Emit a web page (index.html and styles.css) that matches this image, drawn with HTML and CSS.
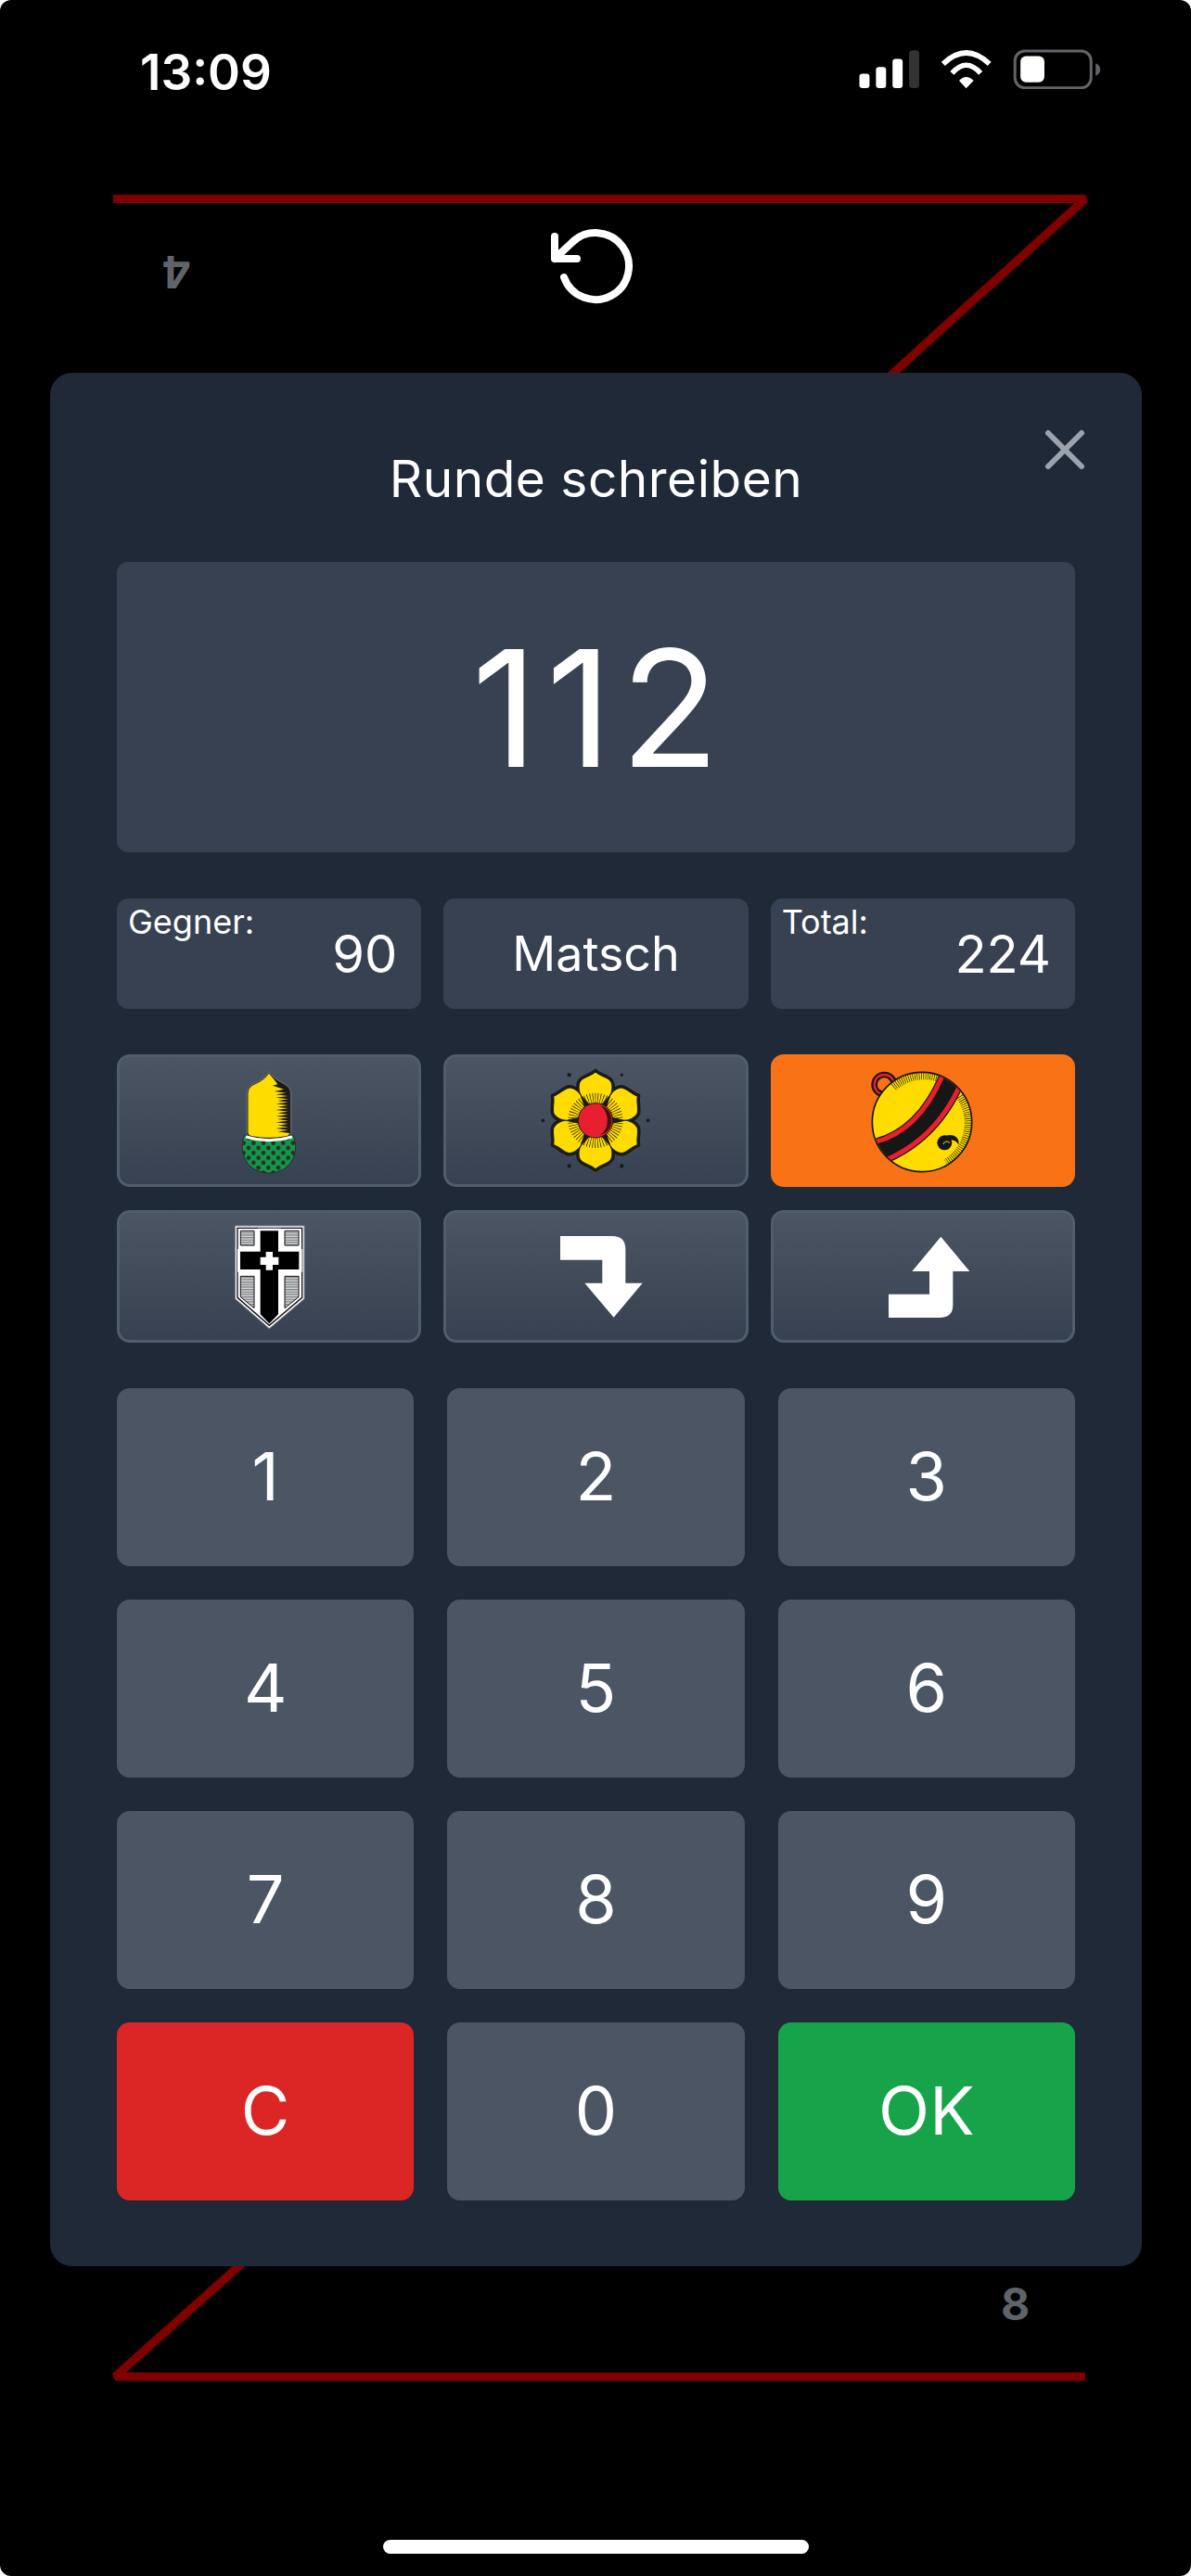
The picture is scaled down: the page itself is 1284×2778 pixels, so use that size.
FILE: index.html
```html
<!DOCTYPE html>
<html>
	<head>
		<meta charset="utf-8">
		<title>Runde schreiben</title>
		<link rel="stylesheet" href="styles.css">
	</head>
	<body>
		<div class="screen">
			<div class="status-bar">
				<span class="time">13:09</span>
				<svg class="status-icons" viewBox="130 40 790 130">
					<rect x="135" y="120" width="33" height="47" rx="10" fill="#fff"/>
					<rect x="189" y="98" width="33" height="69" rx="10" fill="#fff"/>
					<rect x="243" y="72" width="33" height="95" rx="10" fill="#fff"/>
					<rect x="297" y="44" width="33" height="123" rx="12" fill="#333"/>
					<path d="M408 88Q483 16 559 88" fill="none" stroke="#fff" stroke-width="17"/>
					<path d="M437 118Q483 66 530 118" fill="none" stroke="#fff" stroke-width="17"/>
					<path d="M460 143Q483 118 507 143L483 168Z" fill="#fff"/>
					<rect x="642" y="46" width="248" height="120" rx="32" fill="none" stroke="#636469" stroke-width="9"/>
					<rect x="660" y="63" width="78" height="85" rx="18" fill="#fff"/>
					<path d="M905 86Q920 92 920 106Q920 120 905 127Z" fill="#636469"/>
				</svg>
			</div>

			<!-- game table behind the dialog -->
			<svg class="table-lines" viewBox="0 0 1284 2778">
				<path d="M122 214.500H1170L960 405" fill="none" stroke="#800000" stroke-width="9" stroke-linejoin="bevel"/>
				<path d="M262 2440L124 2563H1170" fill="none" stroke="#800000" stroke-width="9" stroke-linejoin="bevel"/>
			</svg>
			<span class="table-num num-top">4</span>
			<span class="table-num num-bottom">8</span>
			<svg class="undo" viewBox="0 0 24 24">
				<path d="M1 4v6h6M3.510 15a9 9 0 1 0 2.130-9.360L1 10"/>
			</svg>

			<div class="modal">
				<svg class="close" viewBox="0 0 24 24"><path d="M6 18L18 6M6 6l12 12"/></svg>
				<div class="title">Runde schreiben</div>
				<div class="display">112</div>

				<div class="row stats">
					<div class="stat"><span class="stat-label">Gegner:</span>90</div>
					<div class="stat stat-center">Matsch</div>
					<div class="stat"><span class="stat-label">Total:</span>224</div>
				</div>

				<div class="row trumps">
					<div class="trump">
						<svg viewBox="330 70 420 390">
							<defs>
								<pattern id="acorn-dots" width="32" height="32" patternUnits="userSpaceOnUse" patternTransform="translate(2 8)">
									<rect width="32" height="32" fill="#0d9a4d"/>
									<circle cx="8" cy="8" r="7" fill="#33291f"/>
									<circle cx="24" cy="24" r="7" fill="#33291f"/>
								</pattern>
							</defs>
							<path d="M460 312C445 345 455 400 495 422Q540 445 585 422C625 400 635 345 618 312Q540 340 460 312Z" fill="url(#acorn-dots)" stroke="#2a2a2a" stroke-width="3"/>
							<path d="M540 108C530 125 515 135 490 147C475 155 471 165 471 180V300Q471 312 485 315Q540 325 595 315Q608 312 608 300V180C608 165 604 155 590 147C565 135 550 125 540 108Z" fill="#ffdc00" stroke="#222" stroke-width="3"/>
							<path d="M545 116C555 128 570 138 590 147C604 155 608 165 608 180V300L606 304L568 299L602 294L562 289L602 284L568 279L602 274L562 269L602 264L568 259L602 254L562 249L602 244L568 239L602 234L562 229L602 224L568 219L602 214L562 209L602 204L568 199L602 194L562 189L600 184L562 179L596 174L558 169L588 162L552 150L568 146Z" fill="#1a1a1a"/>
							<path d="M540 105C530 122 515 132 489 145C473 153 468 165 468 180V305M612 305V180C612 165 606 153 591 145C565 132 550 122 540 105" fill="none" stroke="#7d838c" stroke-width="2"/>
							<path d="M465 316Q540 338 615 316" fill="none" stroke="#fff" stroke-width="9"/>
						</svg>
					</div>
					<div class="trump">
						<svg viewBox="306 70 420 390">
							<g transform="translate(516 263)">
								<g fill="#1a1a1a">
									<path d="M-8 -170L0 -162L8 -170L0 -178Z" transform="rotate(-30)"/>
									<path d="M-6 -170L0 -164L6 -170L0 -176Z" transform="rotate(30)"/>
									<path d="M-7 -170L0 -163L7 -170L0 -177Z" transform="rotate(90)"/>
									<path d="M-8 -170L0 -162L8 -170L0 -178Z" transform="rotate(150)"/>
									<path d="M-8 -170L0 -162L8 -170L0 -178Z" transform="rotate(210)"/>
									<path d="M-7 -170L0 -163L7 -170L0 -177Z" transform="rotate(270)"/>
								</g>
								<g fill="#1a1a1a" stroke="#1a1a1a" stroke-width="18" stroke-linejoin="round">
									<path id="petal-back" d="M0 -30L-46 -80C-56 -95 -56 -118 -48 -128C-38 -140 -14 -144 0 -157C14 -144 38 -140 48 -128C56 -118 56 -95 46 -80Z"/>
									<use href="#petal-back" transform="rotate(60)"/>
									<use href="#petal-back" transform="rotate(120)"/>
									<use href="#petal-back" transform="rotate(180)"/>
									<use href="#petal-back" transform="rotate(240)"/>
									<use href="#petal-back" transform="rotate(300)"/>
								</g>
								<g fill="#ffdc00" stroke="#1a1a1a" stroke-width="3">
									<path id="petal" d="M0 -30L-46 -80C-56 -95 -56 -118 -48 -128C-38 -140 -14 -144 0 -157C14 -144 38 -140 48 -128C56 -118 56 -95 46 -80Z"/>
									<use href="#petal" transform="rotate(60)"/>
									<use href="#petal" transform="rotate(120)"/>
									<use href="#petal" transform="rotate(180)"/>
									<use href="#petal" transform="rotate(240)"/>
									<use href="#petal" transform="rotate(300)"/>
								</g>
								<circle r="72" fill="none" stroke="#1a1a1a" stroke-width="34" stroke-dasharray="2 6"/>
								<circle r="56" fill="#e81f2e" stroke="#1a1a1a" stroke-width="3"/>
								<path d="M16 -48A50 50 0 0 1 16 48A62 62 0 0 0 16 -48Z" fill="#3a1510"/>
							</g>
						</svg>
					</div>
					<div class="trump trump-active">
						<svg viewBox="315 70 420 390">
							<defs>
								<clipPath id="bell-clip"><circle cx="522" cy="268" r="159"/></clipPath>
							</defs>
							<circle cx="400" cy="147" r="32" fill="none" stroke="#161616" stroke-width="20"/>
							<circle cx="400" cy="147" r="32" fill="none" stroke="#e81f2e" stroke-width="7"/>
							<circle cx="522" cy="268" r="161" fill="#ffdc00" stroke="#161616" stroke-width="5"/>
							<g clip-path="url(#bell-clip)">
								<path d="M430 155A150 150 0 0 1 575 125M645 185A150 150 0 0 1 600 400" fill="none" stroke="#161616" stroke-width="26" stroke-dasharray="2 5"/>
								<path d="M370 325Q510 295 585 115L645 155Q570 310 410 395Z" fill="#161616"/>
								<path d="M370 333Q512 295 587 120" fill="none" stroke="#161616" stroke-width="22"/>
								<path d="M410 389Q565 320 642 156" fill="none" stroke="#161616" stroke-width="22"/>
								<path d="M370 333Q512 295 587 120" fill="none" stroke="#e81f2e" stroke-width="15"/>
								<path d="M410 389Q565 320 642 156" fill="none" stroke="#e81f2e" stroke-width="15"/>
							</g>
							<circle cx="595" cy="335" r="24" fill="#161616"/>
							<path d="M600 312C625 305 645 320 640 342C635 330 620 322 605 330Z" fill="#161616"/>
							<path d="M590 340Q598 325 612 335" fill="none" stroke="#ffdc00" stroke-width="3"/>
						</svg>
					</div>
				</div>

				<div class="row trumps">
					<div class="trump">
						<svg viewBox="330 574 420 390">
							<defs>
								<pattern id="stripes" width="8" height="8" patternUnits="userSpaceOnUse">
									<rect width="8" height="8" fill="#d8d8d8"/>
									<rect width="8" height="4" fill="#7d8288"/>
								</pattern>
							</defs>
							<path d="M431 604H654V840L541 936L431 840Z" fill="#fff" stroke="#8a9099" stroke-width="3"/>
							<path d="M438 611H647V836L541 926L438 836Z" fill="none" stroke="#111" stroke-width="4"/>
							<path d="M448 620H492V667H448ZM591 620H636V667H591Z" fill="url(#stripes)" stroke="#111" stroke-width="3"/>
							<path d="M448 767H492V870L448 834ZM591 767H636V834L591 870Z" fill="url(#stripes)" stroke="#111" stroke-width="3"/>
							<path d="M504 612H578V679H647V753H578V878L541 915L504 878V753H438V679H504Z" fill="#fff"/>
							<path d="M512 620H570V687H637V745H570V890L541 920L512 890V745H447V687H512Z" fill="#000"/>
							<path d="M530 688H552V705H571V730H552V747H530V730H512V705H530Z" fill="#fff"/>
						</svg>
					</div>
					<div class="trump">
						<svg viewBox="306 574 420 390">
							<path d="M402 637H570Q613 637 613 680V789H668L575 900L481 789H538V714H402Z" fill="#fff"/>
						</svg>
					</div>
					<div class="trump">
						<svg viewBox="315 574 420 390">
							<path d="M583 639L676 751H622V860Q622 901 580 901H414V825H546V751H490Z" fill="#fff"/>
						</svg>
					</div>
				</div>

				<div class="keypad">
					<div class="key">1</div>
					<div class="key">2</div>
					<div class="key">3</div>
					<div class="key">4</div>
					<div class="key">5</div>
					<div class="key">6</div>
					<div class="key">7</div>
					<div class="key">8</div>
					<div class="key">9</div>
					<div class="key key-red">C</div>
					<div class="key">0</div>
					<div class="key key-green">OK</div>
				</div>
			</div>

			<div class="home-bar"></div>
		</div>
	</body>
</html>
```

FILE: styles.css
```css
html, body {
	margin: 0;
	padding: 0;
	background: #fff;
}

body {
	font-family: Inter, "Liberation Sans", sans-serif;
	color: #fff;
}

.screen {
	position: relative;
	width: 1284px;
	height: 2778px;
	background: #000;
	border-radius: 12px;
	overflow: hidden;
}

.status-bar {
	display: flex;
	justify-content: space-between;
	align-items: flex-start;
	padding: 53px 97px 0 151px;
}

.time {
	padding-top: 3px;
	font-size: 53px;
	font-weight: 600;
	line-height: 44px;
}

.status-icons {
	width: 263px;
	height: 43px;
}

.table-lines {
	position: absolute;
	left: 0;
	top: 0;
	width: 1284px;
	height: 2778px;
}

.table-num {
	position: absolute;
	font-size: 48px;
	font-weight: 700;
	line-height: 48px;
	color: #5f6468;
}

.num-top {
	left: 174px;
	top: 269px;
	transform: rotate(180deg);
}

.num-bottom {
	left: 1079px;
	top: 2461px;
}

.undo {
	position: absolute;
	left: 594px;
	top: 239px;
	width: 96px;
	height: 96px;
	fill: none;
	stroke: #fff;
	stroke-width: 2;
	stroke-linecap: round;
	stroke-linejoin: round;
}

.modal {
	position: absolute;
	left: 54px;
	top: 402px;
	box-sizing: border-box;
	width: 1177px;
	height: 2042px;
	padding: 72px;
	background: #1f2937;
	border-radius: 24px;
}

.close {
	position: absolute;
	right: 47px;
	top: 47px;
	width: 72px;
	height: 72px;
	fill: none;
	stroke: #9ca3af;
	stroke-width: 2;
	stroke-linecap: round;
}

.title {
	font-size: 55px;
	letter-spacing: 0.5px;
	line-height: 84px;
	text-align: center;
	margin-bottom: 48px;
}

.display {
	display: flex;
	justify-content: center;
	align-items: center;
	box-sizing: border-box;
	height: 313px;
	padding-left: 8px;
	margin-bottom: 50px;
	background: #374151;
	border-radius: 12px;
	font-size: 175px;
	letter-spacing: 9px;
}

.row {
	display: grid;
	grid-template-columns: repeat(3, 1fr);
	gap: 24px;
}

.stats {
	margin-bottom: 49px;
}

.stat {
	position: relative;
	display: flex;
	justify-content: flex-end;
	align-items: center;
	height: 119px;
	padding: 0 26px;
	background: #374151;
	border-radius: 12px;
	font-size: 56px;
}

.stat-center {
	justify-content: center;
	font-size: 52px;
}

.stat-label {
	position: absolute;
	left: 12px;
	top: 1px;
	font-size: 36px;
	line-height: 48px;
}

.trumps {
	margin-bottom: 25px;
}

.trump {
	box-sizing: border-box;
	display: flex;
	justify-content: center;
	align-items: center;
	height: 143px;
	background: linear-gradient(#4b5563, #374151);
	border: 3px solid #515c6c;
	border-radius: 14px;
}

.trump svg {
	width: 140px;
	height: 130px;
}

.trump-active {
	background: #f97316;
	border-color: #f97316;
}

.keypad {
	display: grid;
	grid-template-columns: repeat(3, 1fr);
	grid-auto-rows: 192px;
	gap: 36px;
	margin-top: 49px;
}

.key {
	display: flex;
	justify-content: center;
	align-items: center;
	box-sizing: border-box;
	padding-bottom: 3px;
	background: #4b5563;
	border-radius: 14px;
	font-size: 72px;
}

.key-red {
	background: #dc2626;
}

.key-green {
	background: #16a34a;
}

.home-bar {
	position: absolute;
	left: 413px;
	top: 2739px;
	width: 459px;
	height: 15px;
	background: #fff;
	border-radius: 8px;
}
```
